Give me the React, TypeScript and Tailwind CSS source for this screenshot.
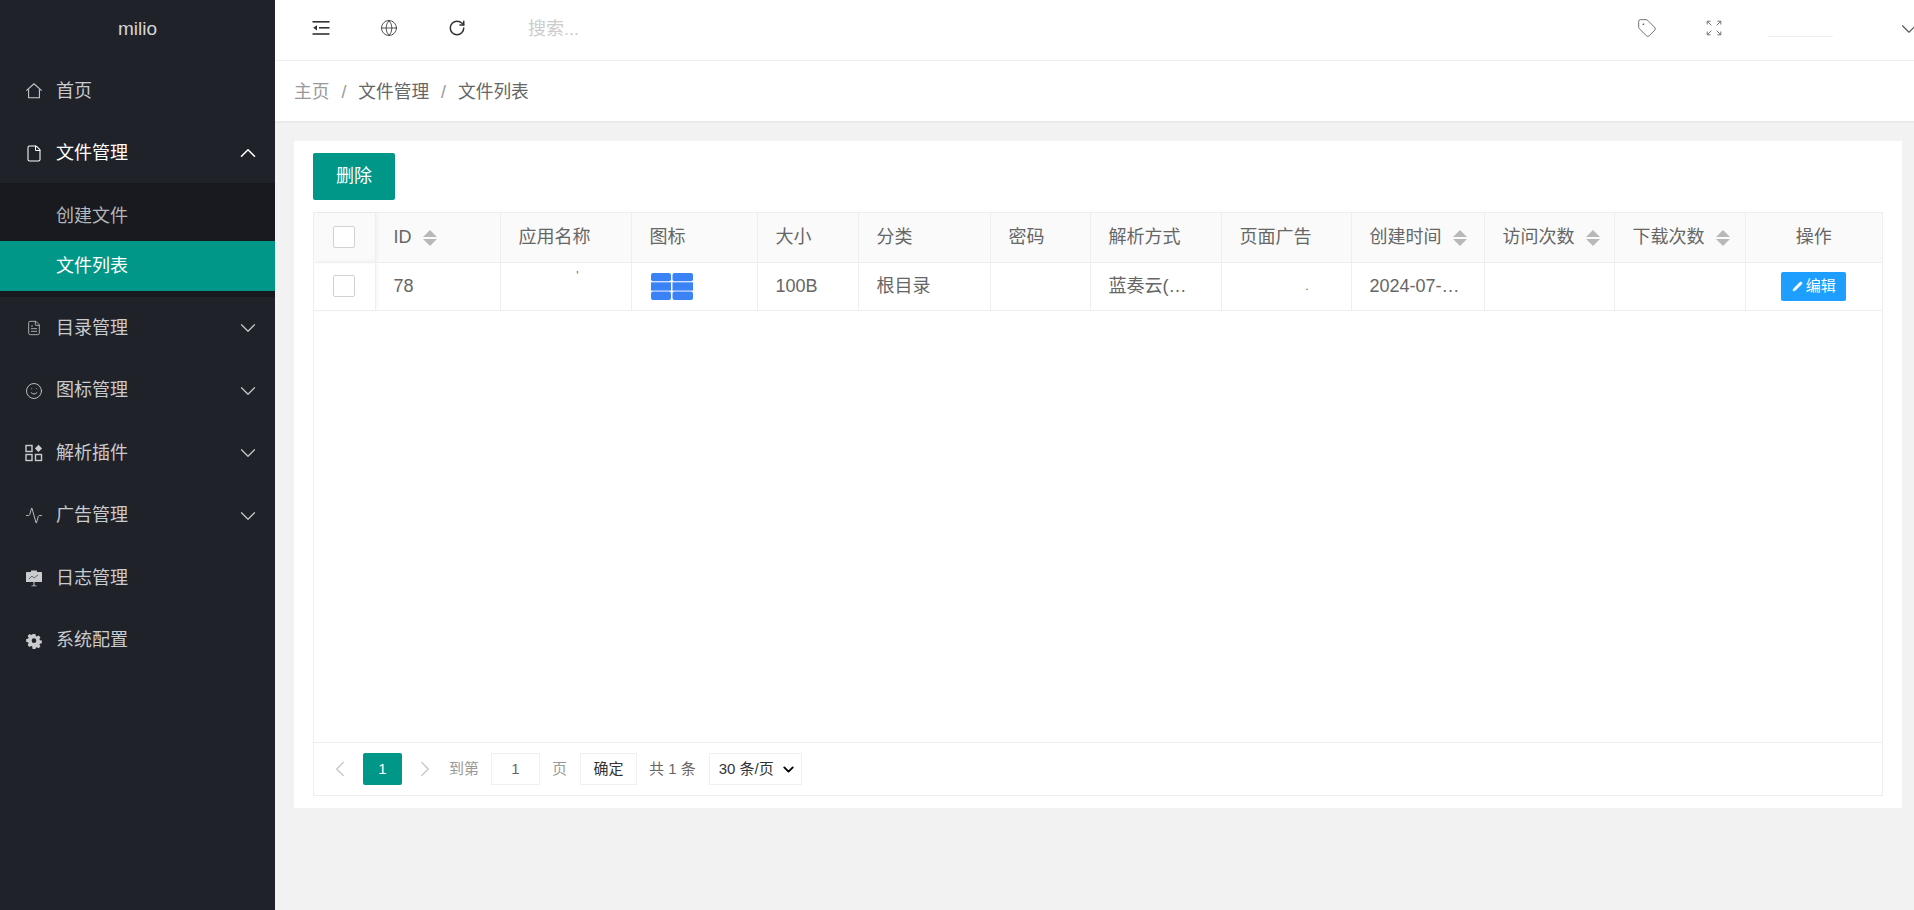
import React from 'react';
import { ChevronDown, ChevronLeft, ChevronRight, ChevronUp, Globe, File, FileText, Smile, Activity, RotateCw, Tag, Pencil } from 'lucide-react';

const font = { fontFamily: '"Liberation Sans", "Noto Sans CJK SC", sans-serif' };

const HomeIcon = () => (
  <svg width="20" height="20" viewBox="0 0 20 20" fill="none" stroke="currentColor" strokeWidth="1.2">
    <path d="M1.5 9.5L10 2l8.5 7.5" />
    <path d="M4 8v9.5h12V8" />
  </svg>
);

const AppsIcon = () => (
  <svg width="18" height="18" viewBox="0 0 18 18" fill="none" stroke="currentColor" strokeWidth="1.4">
    <rect x="1" y="1.5" width="6" height="6" />
    <rect x="1" y="10.5" width="6" height="6" />
    <rect x="10.5" y="10.5" width="6" height="6" />
    <path d="M13.5 0.8l3.6 3.6-3.6 3.6-3.6-3.6z" fill="currentColor" stroke="none" />
  </svg>
);

const BoardIcon = () => (
  <svg width="18" height="18" viewBox="0 0 18 18" fill="currentColor">
    <rect x="1" y="3" width="16" height="10" rx="0.5" />
    <rect x="6" y="1.5" width="6" height="2" />
    <path d="M8.5 13h1v3.5h2v.7h-5v-.7h2z" />
    <path d="M4 10l3-3 2 2 4-3" fill="none" stroke="#20222a" strokeWidth="0.6" />
  </svg>
);

const GearIcon = () => (
  <svg width="16" height="16" viewBox="0 0 18 18">
    <path
      fill="currentColor"
      d="M7.4 1h3.2l.4 2.2 1.3.6 1.9-1.2 2.2 2.2-1.2 1.9.6 1.3 2.2.4v3.2l-2.2.4-.6 1.3 1.2 1.9-2.2 2.2-1.9-1.2-1.3.6-.4 2.2H7.4L7 15.2l-1.3-.6-1.9 1.2-2.2-2.2 1.2-1.9-.6-1.3L0 10V6.8l2.2-.4.6-1.3-1.2-1.9 2.2-2.2 1.9 1.2L7 1.6z"
      transform="translate(0.2 0.2) scale(0.98)"
    />
    <circle cx="9" cy="8.6" r="2.6" fill="#20222a" />
  </svg>
);

const IndentIcon = () => (
  <svg width="18" height="16" viewBox="0 0 18 16" fill="#333">
    <rect x="0.5" y="1" width="17" height="1.6" />
    <rect x="7" y="7" width="10.5" height="1.6" />
    <rect x="0.5" y="13.2" width="17" height="1.6" />
    <path d="M5 5.2v5.2L1.2 7.8z" />
  </svg>
);

const ExpandIcon = () => (
  <svg width="16" height="16" viewBox="0 0 16 16" fill="none" stroke="#666" strokeWidth="0.9">
    <path d="M1.2 4.5V1.2h3.3M1.2 1.2l4.2 4.2M11.5 1.2h3.3v3.3M14.8 1.2l-4.2 4.2M1.2 11.5v3.3h3.3M1.2 14.8l4.2-4.2M14.8 11.5v3.3h-3.3M14.8 14.8l-4.2-4.2" />
  </svg>
);

const SortIcon = () => (
  <span className="inline-flex flex-col gap-[2px] ml-[11px] align-middle">
    <span className="w-0 h-0 border-x-[7px] border-x-transparent border-b-[7px] border-b-[#b8b8b8]" />
    <span className="w-0 h-0 border-x-[7px] border-x-transparent border-t-[7px] border-t-[#b8b8b8]" />
  </span>
);

const Checkbox = () => <span className="block w-[22px] h-[22px] bg-white border border-[#d2d2d2] rounded-[2px]" />;

const menu = [
  { label: '目录管理', icon: <FileText size={16} strokeWidth={1.2} />, arrow: true },
  { label: '图标管理', icon: <Smile size={20} strokeWidth={1.2} />, arrow: true },
  { label: '解析插件', icon: <AppsIcon />, arrow: true },
  { label: '广告管理', icon: <Activity size={19} strokeWidth={1.2} />, arrow: true },
  { label: '日志管理', icon: <BoardIcon />, arrow: false },
  { label: '系统配置', icon: <GearIcon />, arrow: false },
];

const Sidebar = () => (
  <aside className="w-[275px] shrink-0 bg-[#20222a] text-[18px] text-[#c9cbce]">
    <div className="h-[59px] flex items-center justify-center text-[19px] text-[#d6d6d6]">milio</div>
    <div className="h-[62px] flex items-center pl-[25px] pt-[2px]">
      <span className="w-[18px] flex justify-center"><HomeIcon /></span>
      <span className="ml-[13px]">首页</span>
    </div>
    <div className="h-[62px] flex items-center pl-[25px] pr-[14px] pt-[2px] text-white">
      <span className="w-[18px] flex justify-center"><File size={19} strokeWidth={1.4} /></span>
      <span className="ml-[13px] flex-1">文件管理</span>
      <ChevronUp size={26} strokeWidth={1.4} />
    </div>
    <div className="bg-[#181a20] pt-[8px] pb-[6px]">
      <div className="h-[50px] flex items-center pl-[56px] text-[#b4b6b9]">创建文件</div>
      <div className="h-[50px] flex items-center pl-[56px] bg-[#009688] text-white">文件列表</div>
    </div>
    {menu.map((item) => (
      <div key={item.label} className="h-[62.5px] flex items-center pl-[25px] pr-[14px]">
        <span className="w-[18px] flex justify-center">{item.icon}</span>
        <span className="ml-[13px] flex-1">{item.label}</span>
        {item.arrow && <ChevronDown size={26} strokeWidth={1.1} />}
      </div>
    ))}
  </aside>
);

const Topbar = () => (
  <div className="h-[61px] bg-white border-b border-[#eeeeee] flex items-center text-[#333]">
    <span className="ml-[37px] mb-[5px] flex"><IndentIcon /></span>
    <span className="ml-[50px] mb-[5px] flex"><Globe size={18} strokeWidth={1.1} /></span>
    <span className="ml-[50px] mb-[5px] flex"><RotateCw size={18} strokeWidth={2} /></span>
    <span className="ml-[62px] mb-[2px] flex-1 text-[18px] text-[#cccccc]">搜索...</span>
    <span className="mb-[5px] flex"><Tag size={20} strokeWidth={1} className="text-[#555]" /></span>
    <span className="ml-[49px] mb-[5px] flex"><ExpandIcon /></span>
    <span className="ml-[46px] w-[65px] h-px bg-[#eeeeee] mt-[13px]" />
    <span className="ml-[63px] mb-[2px] flex text-[#555] -mr-[8px]"><ChevronDown size={26} strokeWidth={1} /></span>
  </div>
);

const Breadcrumb = () => (
  <div className="h-[62px] bg-white border-b-2 border-[#eaeaea] flex items-center pl-[19px] pt-[2px] text-[17.7px] text-[#666]">
    <span className="text-[#999]">主页</span>
    <span className="mx-[12px] text-[#999]">/</span>
    <span>文件管理</span>
    <span className="mx-[12px] text-[#999]">/</span>
    <span>文件列表</span>
  </div>
);

const headers = [
  { label: '应用名称' },
  { label: '图标' },
  { label: '大小' },
  { label: '分类' },
  { label: '密码' },
  { label: '解析方式' },
  { label: '页面广告' },
  { label: '创建时间', sort: true },
  { label: '访问次数', sort: true },
  { label: '下载次数', sort: true },
];

const th = 'border-r border-[#eeeeee] px-[18px] font-normal text-left whitespace-nowrap';
const td = 'border-r border-[#eeeeee] px-[18px] whitespace-nowrap';

const FileTable = () => (
  <div className="h-[530px] border-b border-[#eeeeee]">
    <table className="w-full table-fixed border-collapse text-[18px] text-[#666]">
      <colgroup>
        <col className="w-[61px]" />
        <col className="w-[125px]" />
        <col className="w-[131px]" />
        <col className="w-[126px]" />
        <col className="w-[101px]" />
        <col className="w-[132px]" />
        <col className="w-[100px]" />
        <col className="w-[131px]" />
        <col className="w-[130px]" />
        <col className="w-[133px]" />
        <col className="w-[130px]" />
        <col className="w-[131px]" />
        <col />
      </colgroup>
      <thead>
        <tr className="h-[49px] bg-[#fafafa] border-b border-[#eeeeee]">
          <th className="border-r border-[#eeeeee] pl-[19px] shadow-[2px_0_4px_rgba(0,0,0,0.05)]"><Checkbox /></th>
          <th className={th}>ID<SortIcon /></th>
          {headers.map((h) => (
            <th key={h.label} className={th}>
              {h.label}
              {h.sort && <SortIcon />}
            </th>
          ))}
          <th className="font-normal text-center">操作</th>
        </tr>
      </thead>
      <tbody>
        <tr className="h-[48px] border-b border-[#eeeeee]">
          <td className="border-r border-[#eeeeee] pl-[19px] shadow-[2px_0_4px_rgba(0,0,0,0.05)]"><Checkbox /></td>
          <td className={td}>78</td>
          <td className={`${td} text-right align-top pt-[4px] text-[12px] pr-[52px]`}>'</td>
          <td className={td}>
            <svg width="42" height="27" viewBox="0 0 42 27" fill="#3b82f6" className="block ml-[1px]">
              <rect x="0" y="0" width="20" height="8.3" rx="2" />
              <rect x="21.5" y="0" width="20.5" height="8.3" rx="2" />
              <rect x="0" y="9.3" width="20" height="8.3" />
              <rect x="21.5" y="9.3" width="20.5" height="8.3" />
              <rect x="0" y="18.6" width="20" height="8.3" rx="2" />
              <rect x="21.5" y="18.6" width="20.5" height="8.3" rx="2" />
            </svg>
          </td>
          <td className={td}>100B</td>
          <td className={td}>根目录</td>
          <td className={td}></td>
          <td className={td}>蓝奏云(…</td>
          <td className={`${td} text-right pr-[42px] text-[12px]`}>.</td>
          <td className={td}>2024-07-…</td>
          <td className={td}></td>
          <td className={td}></td>
          <td className="text-center">
            <span className="inline-flex items-center justify-center gap-[3px] w-[65px] h-[29px] rounded-[2px] bg-[#1e9fff] text-white text-[15px]">
              <Pencil size={11} fill="white" strokeWidth={1} />
              编辑
            </span>
          </td>
        </tr>
      </tbody>
    </table>
  </div>
);

const Pagination = () => (
  <div className="h-[52px] flex items-center pl-[13px] text-[15px] text-[#999]">
    <ChevronLeft size={26} strokeWidth={1.2} className="text-[#c6c6c6]" />
    <span className="ml-[10px] w-[39px] h-[32px] rounded-[2px] bg-[#009688] text-white flex items-center justify-center">1</span>
    <ChevronRight size={26} strokeWidth={1.2} className="ml-[10px] text-[#c6c6c6]" />
    <span className="ml-[11px]">到第</span>
    <span className="ml-[12px] w-[49px] h-[32px] border border-[#f0f0f0] text-[#666] flex items-center justify-center">1</span>
    <span className="ml-[12px]">页</span>
    <span className="ml-[13px] w-[57px] h-[32px] border border-[#f0f0f0] text-[#333] flex items-center justify-center">确定</span>
    <span className="ml-[12px] text-[#666]">共 1 条</span>
    <span className="ml-[13px] w-[93px] h-[32px] border border-[#f0f0f0] text-[#333] flex items-center pl-[9px] gap-[6px]">
      30 条/页
      <ChevronDown size={17} strokeWidth={2.6} className="text-black" />
    </span>
  </div>
);

export default function App() {
  return (
    <div className="flex h-[910px] w-[1914px] overflow-hidden" style={font}>
      <Sidebar />
      <main className="flex-1 min-w-0 bg-[#f2f2f2]">
        <Topbar />
        <Breadcrumb />
        <div className="pt-[18px] pl-[19px] pr-[12px]">
          <div className="bg-white pt-[12px] px-[19px] pb-[12px]">
            <button className="block w-[82px] h-[47px] bg-[#009688] text-white text-[18px] rounded-[2px] mb-[12px]">删除</button>
            <div className="border border-[#eeeeee]">
              <FileTable />
              <Pagination />
            </div>
          </div>
        </div>
      </main>
    </div>
  );
}
